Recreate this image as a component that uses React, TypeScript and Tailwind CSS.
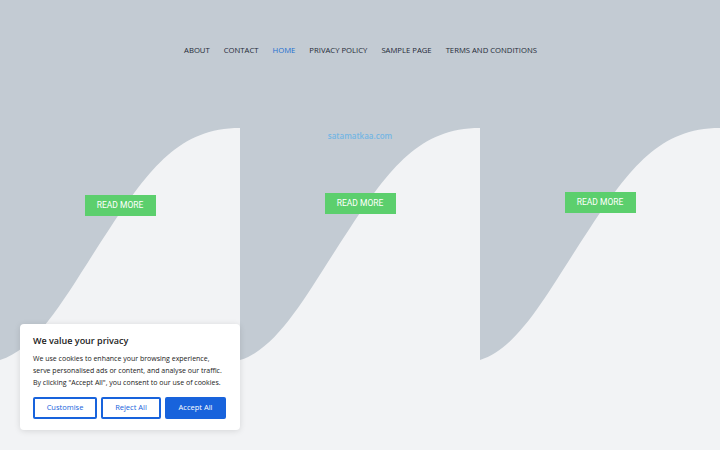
import React from 'react';

const navItems = ['About', 'Contact', 'Home', 'Privacy Policy', 'Sample Page', 'Terms and Conditions'];

function Wave() {
  return (
    <svg className="absolute inset-0 h-full w-full" viewBox="0 0 240 232" preserveAspectRatio="none">
      <path d="M0,232 C40,220 70,160 110,100 S180,0 240,0 L240,232 Z" fill="#f2f3f5" />
    </svg>
  );
}

function ReadMore() {
  return (
    <button className="mx-auto block h-[21px] w-[71px] bg-[#5ccf6d] text-[8.5px] font-normal uppercase text-white" style={{ fontFamily: 'Roboto, sans-serif' }}>
      Read More
    </button>
  );
}

export default function App() {
  const columns = [
    { pt: 'pt-[67px]', brand: false },
    { pt: 'pt-[3px]', brand: true },
    { pt: 'pt-[64px]', brand: false },
  ];

  return (
    <div className="relative h-[450px] w-full overflow-hidden bg-[#f2f3f5]" style={{ fontFamily: '"Open Sans", sans-serif' }}>
      {/* Header */}
      <div className="bg-[#c3cbd3]">
        <nav className="flex h-[128px] items-start justify-center gap-[14px] pt-[45px] pl-[1px]">
          {navItems.map((item) => (
            <a
              key={item}
              className={`text-[7.7px] uppercase leading-[10px] ${item === 'Home' ? 'text-[#1e6fd0]' : 'text-[#1f2a37]'}`}
            >
              {item}
            </a>
          ))}
        </nav>

        {/* Wave columns */}
        <div className="grid grid-cols-3">
          {columns.map((col, i) => (
            <div key={i} className="relative h-[232px]">
              <Wave />
              <div className={`relative ${col.pt}`}>
                {col.brand && (
                  <p className="mb-[52px] text-center text-[8px] font-semibold leading-[10px] text-[#74b6e3]">satamatkaa.com</p>
                )}
                <ReadMore />
              </div>
            </div>
          ))}
        </div>
      </div>

      {/* Cookie banner */}
      <div className="absolute bottom-[20px] left-[20px] w-[220px] rounded-[4px] bg-white px-[13px] pt-[11px] pb-[11px] shadow-[0_1px_6px_rgba(0,0,0,0.12)]">
        <h2 className="text-[9px] font-semibold leading-[12px] text-[#212121]">We value your privacy</h2>
        <p className="mt-[6px] whitespace-nowrap text-[7px] leading-[12px] text-[#212121]">
          We use cookies to enhance your browsing experience,
          <br />
          serve personalised ads or content, and analyse our traffic.
          <br />
          By clicking "Accept All", you consent to our use of cookies.
        </p>
        <div className="mt-[8px] flex gap-[4px]">
          <button className="h-[22px] w-[64px] rounded-[2px] border-2 border-[#1863dc] text-[7.5px] text-[#1863dc]">Customise</button>
          <button className="h-[22px] w-[60px] rounded-[2px] border-2 border-[#1863dc] text-[7.5px] text-[#1863dc]">Reject All</button>
          <button className="h-[22px] w-[61px] rounded-[2px] border-2 border-[#1863dc] bg-[#1863dc] text-[7.5px] text-white">Accept All</button>
        </div>
      </div>
    </div>
  );
}
